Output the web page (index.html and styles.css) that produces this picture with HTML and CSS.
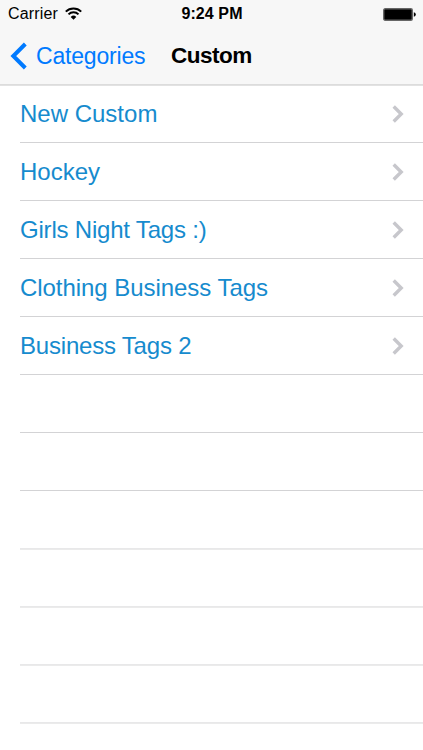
FILE: index.html
```html
<!DOCTYPE html>
<html lang="en">
<head>
<meta charset="utf-8">
<title>Custom</title>
<link rel="stylesheet" href="styles.css">
</head>
<body>
<header class="header">
  <div class="status">
    <div class="carrier"><span class="carrier-name">Carrier</span>
      <svg class="wifi" width="17" height="13" viewBox="0 0 17 13"><g fill="none" stroke="#000" stroke-width="2"><path d="M.8 4.600a10.900 10.900 0 0 1 15.400 0"/><path d="M3.500 7.400a7 7 0 0 1 10 0"/></g><path d="M5.700 9.900a4 4 0 0 1 5.600 0L8.500 12.700z"/></svg>
    </div>
    <span class="time">9:24 PM</span>
    <svg class="battery" width="33" height="13" viewBox="0 0 33 13"><rect x=".7" y=".7" width="28.600" height="11.600" rx="1.500" fill="#000" stroke="#666" stroke-width="1.400"/><path d="M30.800 4.200q2 .4 2 2.300t-2 2.300z"/></svg>
  </div>
  <nav class="nav">
    <a class="back"><svg width="17" height="28" viewBox="0 0 17 28"><path d="M15.300 2 3.300 14l12 12" fill="none" stroke="#007aff" stroke-width="4"/></svg><span class="back-label">Categories</span></a>
    <h1 class="title">Custom</h1>
  </nav>
</header>
<ul class="list">
  <li class="row"><span class="label">New Custom</span><svg class="chev" width="12" height="18" viewBox="0 0 12 18"><path d="m1.700 1.500 7.500 7.500-7.500 7.500"/></svg></li>
  <li class="row"><span class="label">Hockey</span><svg class="chev" width="12" height="18" viewBox="0 0 12 18"><path d="m1.700 1.500 7.500 7.500-7.500 7.500"/></svg></li>
  <li class="row"><span class="label girls">Girls Night Tags :)</span><svg class="chev" width="12" height="18" viewBox="0 0 12 18"><path d="m1.700 1.500 7.500 7.500-7.500 7.500"/></svg></li>
  <li class="row"><span class="label clothing">Clothing Business Tags</span><svg class="chev" width="12" height="18" viewBox="0 0 12 18"><path d="m1.700 1.500 7.500 7.500-7.500 7.500"/></svg></li>
  <li class="row"><span class="label business">Business Tags 2</span><svg class="chev" width="12" height="18" viewBox="0 0 12 18"><path d="m1.700 1.500 7.500 7.500-7.500 7.500"/></svg></li>
  <li class="row"></li><li class="row"></li><li class="row soft"></li><li class="row soft"></li><li class="row soft"></li><li class="row soft"></li>
</ul>
</body>
</html>
```

FILE: styles.css
```css
* { box-sizing: border-box; }
body { margin: 0; height: 750px; overflow: hidden; background: #fff; font-family: "Liberation Sans", Arial, sans-serif; }
.header { height: 85px; background: #f7f7f7; box-shadow: inset 0 -1px #dcdcdc, 0 1px #e2e2e2; }
.status { height: 27px; display: grid; grid-template-columns: 1fr auto 1fr; align-items: center; padding: 1px 7px 0 8px; font-size: 16px; }
.carrier { display: flex; align-items: center; gap: 7px; }
.carrier-name { letter-spacing: .15px; }
.wifi { margin-bottom: 1px; }
.time { font-weight: bold; font-size: 16px; letter-spacing: .1px; }
.battery { justify-self: end; }
.nav { height: 58px; display: flex; align-items: center; padding-left: 10px; }
.back { display: flex; align-items: center; gap: 9px; width: 161px; color: #007aff; font-size: 23px; letter-spacing: -.18px; }
.title { margin: 0; font-size: 22.5px; font-weight: bold; letter-spacing: -.5px; }
.list { margin: 0; padding: 0 0 0 20px; list-style: none; }
.row { height: 58px; display: flex; align-items: center; justify-content: space-between; padding-right: 19px; border-bottom: 1px solid #d3d3d5; color: #168bce; font-size: 24px; }
.soft { border-bottom-color: #e8e8e9; box-shadow: 0 1px #ebebeb; }
.label { white-space: nowrap; }
.girls { letter-spacing: -.2px; }
.clothing { letter-spacing: -.05px; }
.business { letter-spacing: -.2px; }
.chev path { fill: none; stroke: #c7c7cc; stroke-width: 3.4; }
```
